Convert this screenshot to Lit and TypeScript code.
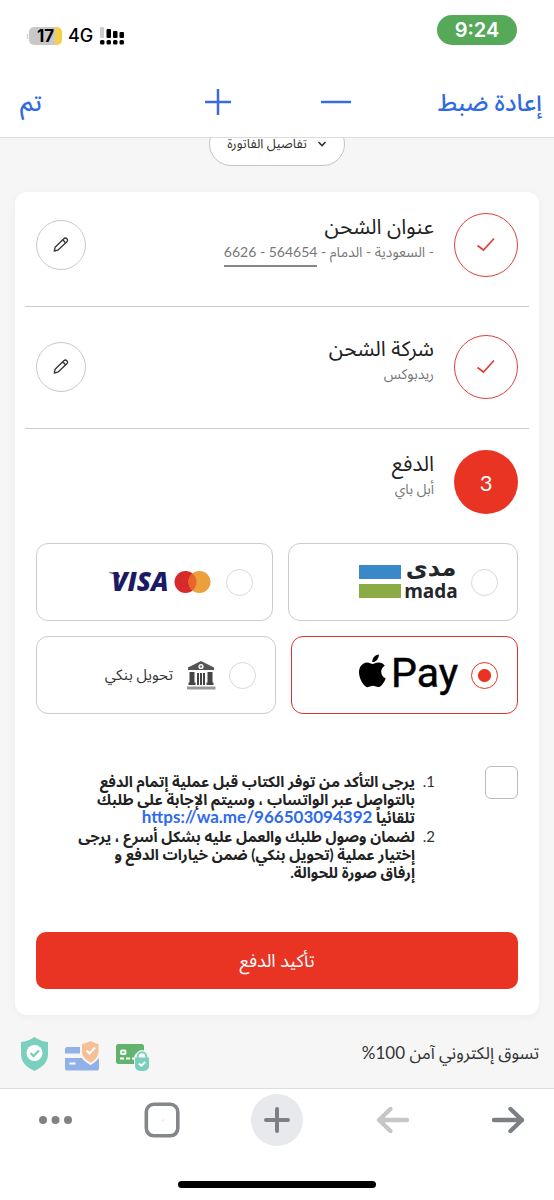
import { LitElement, html, css } from "lit";
import { customElement, property, state } from "lit/decorators.js";
import { classMap } from "lit/directives/class-map.js";

const pencil = html`<svg width="18" height="18" viewBox="0 0 18 18" fill="none" stroke="#333" stroke-width="1.3" stroke-linejoin="round" aria-hidden="true">
  <path d="M2.300 15.200l.8-3.900 8.700-8.500c.9-.9 2.200-.9 3.100 0s.9 2.200 0 3L6.300 13.800z" />
  <path d="M10.200 4.400c1.800.2 2.900 1.200 3.100 2.900" stroke-width="1.100" />
</svg>`;

const check = html`<svg width="20" height="18" viewBox="0 0 20 18" fill="none" stroke="#e0403a" stroke-width="1.700" aria-hidden="true">
  <path d="M1.500 9.500l6 4.500L18 2.500" />
</svg>`;

const madaLogo = html`<svg width="100" height="38" viewBox="0 0 100 38" role="img" aria-label="mada">
  <rect x="1" y="2" width="42" height="14" fill="#3b88c9" />
  <rect x="1" y="21" width="42" height="14" fill="#8aab45" />
  <text class="mada-ar" x="73" y="13" text-anchor="middle">مدى</text>
  <text class="mada-en" x="73" y="35" text-anchor="middle">mada</text>
</svg>`;

const cardsLogo = html`<svg width="104" height="28" viewBox="0 0 104 28" role="img" aria-label="Visa Mastercard">
  <path d="M2 4.500h8.500l2.500 3.500-1 2C9.500 7 6 5.500 2 5z" fill="#1a1a66" />
  <text class="visa" x="33" y="23" text-anchor="middle">VISA</text>
  <circle cx="78.500" cy="14" r="11" fill="#d8292b" />
  <circle cx="92.500" cy="14" r="11" fill="#eba03c" />
  <path d="M85.500 5.500a11 11 0 0 1 0 17a11 11 0 0 1 0-17z" fill="#e8662d" />
</svg>`;

const appleLogo = html`<svg width="100" height="50" viewBox="0 0 100 50" role="img" aria-label="Apple Pay">
  <path transform="translate(-2 4.500) scale(1.360)" d="M12.152 6.896c-.948 0-2.415-1.078-3.960-1.040-2.040.027-3.910 1.183-4.961 3.014-2.117 3.675-.546 9.103 1.519 12.090 1.013 1.454 2.208 3.090 3.792 3.039 1.520-.065 2.090-.987 3.935-.987 1.831 0 2.350.987 3.960.948 1.637-.026 2.676-1.480 3.676-2.948 1.156-1.688 1.636-3.325 1.662-3.415-.039-.013-3.182-1.221-3.220-4.857-.026-3.040 2.480-4.494 2.597-4.559-1.429-2.090-3.623-2.324-4.390-2.376-2-.156-3.675 1.090-4.610 1.090zM15.530 3.830c.843-1.012 1.400-2.427 1.245-3.830-1.207.052-2.662.805-3.532 1.818-.78.896-1.454 2.338-1.273 3.714 1.338.104 2.715-.688 3.559-1.701" />
  <text class="pay" x="33" y="37">Pay</text>
</svg>`;

const bankLogo = html`<svg width="30" height="30" viewBox="0 0 30 30" aria-hidden="true">
  <path d="M15 1L2 7.500V10h26V7.500z" fill="#555" />
  <circle cx="15" cy="6.500" r="2.600" fill="#fff" /><circle cx="15" cy="6.500" r="1.200" fill="#777" />
  <path d="M3.500 12h5v10.500h1V25h-7v-2.500h1zM21.500 12h5v10.500h1V25h-7v-2.500h1zM11 13h2v12h-2zM14 13h2v12h-2zM17 13h2v12h-2z" fill="#444" />
  <rect x="1" y="26.500" width="28.500" height="3" fill="#999" />
</svg>`;

@customElement("checkout-step")
class CheckoutStep extends LitElement {
  @property() heading = "";
  @property() number = "";
  @property({ type: Boolean }) done = false;

  static styles = css`
    :host { display: flex; align-items: flex-start; gap: 20px; }
    .mark { box-sizing: border-box; width: 64px; height: 64px; border-radius: 50%; display: grid; place-items: center; flex: none; background: #e93323; color: #fff; font-size: 22px; }
    .done { background: #fff; border: 1px solid #e0403a; }
    .body { flex: 1; min-width: 0; color: #777; font-size: 14px; line-height: 28px; }
    h2 { margin: 0; font-size: 21px; line-height: 25px; font-weight: 400; color: #222; }
    button { align-self: center; box-sizing: border-box; width: 50px; height: 50px; padding: 0; border: 1px solid #c8c8c8; border-radius: 50%; background: #fff; display: grid; place-items: center; }
  `;

  render() {
    return html`
      <span class=${classMap({ mark: true, done: this.done })}>${this.done ? check : this.number}</span>
      <div class="body"><h2>${this.heading}</h2><slot></slot></div>
      ${this.done ? html`<button aria-label="تعديل">${pencil}</button>` : ""}
    `;
  }
}

@customElement("app-root")
class AppRoot extends LitElement {
  @state() method = "apple";

  static styles = css`
    :host { display: flex; flex-direction: column; min-height: 100vh; background: #fff; direction: rtl; font-family: Lato, "Noto Sans Arabic", "DejaVu Sans", sans-serif; color: #333; }
    button { font-family: inherit; border: 0; background: none; padding: 0; }
    svg { display: block; direction: ltr; overflow: visible; }
    .status { display: flex; justify-content: space-between; align-items: center; padding: 15px 37px 0 27px; height: 42px; }
    .time { background: #56a958; color: #fff; border-radius: 15px; width: 80px; margin-bottom: 12px; text-align: center; font: 600 20px/30px Inter, sans-serif; }
    .signals { display: flex; align-items: center; gap: 6px; direction: ltr; color: #000; }
    .battery { width: 33px; height: 18px; border-radius: 5px; background: linear-gradient(90deg, #c8c8c8 80%, #f5cf45 80%); font: 700 17px/18px Inter, sans-serif; text-align: center; }
    .battery-wrap { display: flex; align-items: center; gap: 1px; }
    .nub { width: 1px; height: 5px; background: #c8c8c8; }
    .net { font: 500 18px/20px Inter, sans-serif; }
    .tools { display: grid; grid-template-columns: 1fr 118px 118px 1fr; align-items: center; height: 81px; box-sizing: border-box; padding-top: 9px; border-bottom: 1px solid #dcdcdc; }
    .tools button { color: #2f6be0; font-size: 24px; font-weight: 500; line-height: 36px; white-space: nowrap; justify-self: center; }
    .tools .reset { justify-self: start; padding-right: 12px; }
    .tools .finish { justify-self: end; padding-left: 20px; }
    main { flex: 1; background: #f6f6f6; padding: 0 15px; }
    .peek { display: flex; justify-content: center; align-items: flex-end; height: 28px; overflow: hidden; margin-bottom: 26px; }
    .bill { box-sizing: border-box; flex: none; width: 136px; height: 44px; border: 1px solid #c4c4c4; border-radius: 22px; background: #fff; color: #333; font-size: 13px; display: flex; justify-content: center; align-items: center; gap: 10px; white-space: nowrap; }
    .card { background: #fff; border-radius: 12px; box-shadow: 0 2px 8px rgba(0, 0, 0, 0.04); padding: 21px 10px 26px; }
    checkout-step { padding: 0 11px; }
    .rule { border: 0; border-top: 1px solid #ccc; margin: 29px 0 28px; }
    .rule.tight { margin-bottom: 21px; }
    .code { display: inline-block; border-bottom: 2px solid #888; line-height: 26px; color: #777; text-decoration: none; }
    .methods { border: 0; margin: 29px 11px 0; padding: 0; display: grid; gap: 15px; min-width: 0; }
    .pair { display: flex; gap: 15px; }
    .option { box-sizing: border-box; height: 78px; border: 1px solid #ccc; border-radius: 12px; display: flex; align-items: center; gap: 13px; padding: 0 19px; font-size: 15px; flex: 230 1 0; min-width: 0; }
    .option.wide { flex-grow: 238; gap: 15px; }
    .pair.second .option { flex-grow: 226; }
    .pair.second .wide { flex-grow: 242; gap: 13px; }
    .option.on { border-color: #e0302a; }
    .option span { white-space: nowrap; }
    .option input { appearance: none; flex: none; box-sizing: border-box; width: 27px; height: 27px; margin: 0; border: 1px solid #d8d8d8; border-radius: 50%; background: #fff; }
    .option input:checked { border-color: #e93323; background: radial-gradient(circle, #e93323 6px, #fff 7px); }
    .visa { font: italic 800 26px "Open Sans", sans-serif; fill: #1a1a66; }
    .mada-ar { font: 700 24px "DejaVu Sans", sans-serif; fill: #23262b; }
    .mada-en { font: 700 19px "Open Sans", sans-serif; fill: #23262b; }
    .pay { font: 400 41px Roboto, sans-serif; stroke: #000; stroke-width: 0.5px; }
    .terms { display: flex; align-items: flex-start; gap: 51px; margin: 52px 11px 0; }
    .terms input { appearance: none; flex: none; box-sizing: border-box; width: 33px; height: 33px; margin: 0; border: 1px solid #bbb; border-radius: 6px; background: #fff; }
    ol { margin: 6px 0 0; padding: 0 19px 0 0; font-size: 15px; line-height: 18px; flex: 1; display: grid; gap: 1px; }
    li { white-space: nowrap; }
    li::marker { content: counter(list-item) ".\\00a0\\00a0"; }
    li b { font-weight: 700; color: #222; }
    li a { color: #2f6be8; text-decoration: none; font-size: 17px; }
    .pay-now { display: block; width: calc(100% - 22px); height: 57px; margin: 51px 11px 0; border-radius: 10px; background: #e93323; color: #fff; font-size: 18px; }
    .safe { display: flex; justify-content: space-between; align-items: center; height: 36px; padding: 21px 0 16px; font-size: 17px; }
    .badges { display: flex; gap: 16px; padding-left: 5px; }
    .nav { display: flex; justify-content: space-between; align-items: flex-start; border-top: 1px solid #ddd; padding: 5px 20px 0; height: 87px; }
    .nav button { width: 52px; height: 52px; display: grid; place-items: center; border-radius: 50%; }
    .nav .new { background: #e8e9ed; }
    .nav .more { justify-items: start; }
    .home { width: 198px; height: 7px; border-radius: 4px; background: #000; margin: 0 auto 12px; }
  `;

  option(id: string, content: unknown, label: string, wide = false) {
    const on = this.method === id;
    return html`<label class=${classMap({ option: true, wide, on })}>
      <input type="radio" name="method" aria-label=${label} .checked=${on} @change=${() => (this.method = id)} />
      ${content}
    </label>`;
  }

  render() {
    return html`
      <div class="status">
        <div class="time">9:24</div>
        <div class="signals">
          <div class="battery-wrap"><div class="nub"></div><div class="battery">17</div></div>
          <div class="net">4G</div>
          <svg width="26" height="18" viewBox="0 0 26 18" fill="#000" aria-hidden="true">
            <rect x="1" y="0" width="4" height="11" rx="1" fill="#ccc" />
            <rect x="7.500" y="2" width="4.500" height="9" rx="1" /><rect x="14" y="4" width="4.500" height="7" rx="1" /><rect x="20.500" y="5" width="4.500" height="6" rx="1" />
            <rect x="1" y="13" width="4.500" height="4.500" rx="1.500" /><rect x="7.500" y="13" width="4.500" height="4.500" rx="1.500" /><rect x="14" y="13" width="4.500" height="4.500" rx="1.500" /><rect x="20.500" y="13" width="4.500" height="4.500" rx="1.500" />
          </svg>
        </div>
      </div>
      <div class="tools">
        <button class="reset">إعادة ضبط</button>
        <button aria-label="تصغير"><svg width="30" height="28" viewBox="0 0 30 28" stroke="#3a6bd8" stroke-width="2.500"><path d="M0 14h30" /></svg></button>
        <button aria-label="تكبير"><svg width="28" height="28" viewBox="0 0 28 28" stroke="#3a6bd8" stroke-width="2.500"><path d="M1 14h26M14 1v26" /></svg></button>
        <button class="finish">تم</button>
      </div>
      <main>
        <div class="peek">
          <button class="bill">
            <svg width="10" height="8" viewBox="0 0 10 8" fill="none" stroke="#333" stroke-width="1.600"><path d="M1.500 2L5 5.500 8.500 2" /></svg>
            تفاصيل الفاتورة
          </button>
        </div>
        <section class="card">
          <checkout-step heading="عنوان الشحن" done>- السعودية - الدمام - <a class="code" href="#">564654 - 6626</a></checkout-step>
          <hr class="rule" />
          <checkout-step heading="شركة الشحن" done>ريدبوكس</checkout-step>
          <hr class="rule tight" />
          <checkout-step heading="الدفع" number="3">أبل باي</checkout-step>
          <fieldset class="methods" aria-label="الدفع">
            <div class="pair">${this.option("mada", madaLogo, "mada")}${this.option("card", cardsLogo, "Visa Mastercard", true)}</div>
            <div class="pair second">${this.option("apple", appleLogo, "Apple Pay")}${this.option("bank", html`${bankLogo}<span>تحويل بنكي</span>`, "تحويل بنكي", true)}</div>
          </fieldset>
          <div class="terms">
            <input type="checkbox" id="agree" aria-labelledby="terms" />
            <ol id="terms">
              <li><b>يرجى التأكد من توفر الكتاب قبل عملية إتمام الدفع<br />بالتواصل عبر الواتساب ، وسيتم الإجابة على طلبك<br />تلقائياً <a href="https://wa.me/966503094392">https://wa.me/966503094392</a></b></li>
              <li><b>لضمان وصول طلبك والعمل عليه بشكل أسرع ، يرجى<br />إختيار عملية (تحويل بنكي) ضمن خيارات الدفع و<br />إرفاق صورة للحوالة.</b></li>
            </ol>
          </div>
          <button class="pay-now">تأكيد الدفع</button>
        </section>
        <div class="safe">
          <span>تسوق إلكتروني آمن 100%</span>
          <div class="badges">
            <svg width="35" height="34" viewBox="0 0 35 34" aria-hidden="true">
              <rect x="1" y="7" width="28" height="20" rx="2.500" fill="#62b36d" />
              <rect x="6" y="13.500" width="4.500" height="3.500" rx="1" fill="none" stroke="#fff" stroke-width="1.800" />
              <path d="M5 21.500h4M11 21.500h4M17 21.500h3" stroke="#fff" stroke-width="2" />
              <rect x="19" y="15" width="16" height="20" rx="6" fill="#f6f6f6" /><circle cx="27" cy="19" r="6" fill="#f6f6f6" />
              <path d="M22.700 22v-2.500a4.300 4.300 0 0 1 8.600 0V22" fill="none" stroke="#7bcfbd" stroke-width="2" />
              <path d="M20 20.500h14V29a5 5 0 0 1-5 5h-4a5 5 0 0 1-5-5z" fill="#7bcfbd" />
              <path d="M24 26.500l2.300 2.200 4-3.700" fill="none" stroke="#fff" stroke-width="1.800" />
            </svg>
            <svg width="34" height="34" viewBox="0 0 34 34" aria-hidden="true">
              <path d="M2.500 10H15v6.500H0v-4A2.500 2.500 0 0 1 2.500 10zM0 21h34v10.500a2 2 0 0 1-2 2H2a2 2 0 0 1-2-2z" fill="#91b2e8" />
              <path d="M4.500 26.500h6" stroke="#fff" stroke-width="2" />
              <path d="M25.500 3l9 3.500v9c0 5-4 8.500-9 11.500-5-3-9.500-6.500-9.500-11.500v-9z" fill="#f5c194" stroke="#f6f6f6" stroke-width="2" />
              <path d="M21.500 13.500l3 3L30 10.500" fill="none" stroke="#fff" stroke-width="2" />
            </svg>
            <svg width="29" height="34" viewBox="0 0 29 34" aria-hidden="true">
              <path d="M14.500 0C19 3 23 4.500 28 5v12c0 8.500-6 13.500-13.500 17C7 30.500 1 25.500 1 17V5c5-.5 9-2 13.500-5z" fill="#7bd0bd" />
              <circle cx="14.500" cy="16" r="8" fill="#fff" />
              <path d="M10.500 16l3 3 5.500-5.500" fill="none" stroke="#7bd0bd" stroke-width="2.400" />
            </svg>
          </div>
        </div>
      </main>
      <nav class="nav">
        <button aria-label="التالي"><svg width="34" height="30" viewBox="0 0 34 30" fill="none" stroke="#7c8085" stroke-width="4.400" stroke-linecap="round" stroke-linejoin="round"><path d="M3 15h28M19.500 4L31 15 19.500 26" /></svg></button>
        <button aria-label="السابق"><svg width="34" height="30" viewBox="0 0 34 30" fill="none" stroke="#c6c6c6" stroke-width="4.400" stroke-linecap="round" stroke-linejoin="round"><path d="M31 15H3M14.500 4L3 15l11.500 11" /></svg></button>
        <button class="new" aria-label="علامة تبويب جديدة"><svg width="30" height="30" viewBox="0 0 30 30" stroke="#7c8085" stroke-width="4" stroke-linecap="round"><path d="M4 15h22M15 4v22" /></svg></button>
        <button aria-label="علامات التبويب"><svg width="36" height="36" viewBox="0 0 36 36" fill="none" stroke="#84878a" stroke-width="3.600"><rect x="2.300" y="2.300" width="31.500" height="31.500" rx="7.500" /><circle cx="19" cy="18" r=".6" fill="#e09090" stroke="none" /></svg></button>
        <button class="more" aria-label="المزيد"><svg width="34" height="10" viewBox="0 0 34 10" fill="#808285"><circle cx="5" cy="5" r="4" /><circle cx="17.500" cy="5" r="4" /><circle cx="30" cy="5" r="4" /></svg></button>
      </nav>
      <div class="home"></div>
    `;
  }
}
